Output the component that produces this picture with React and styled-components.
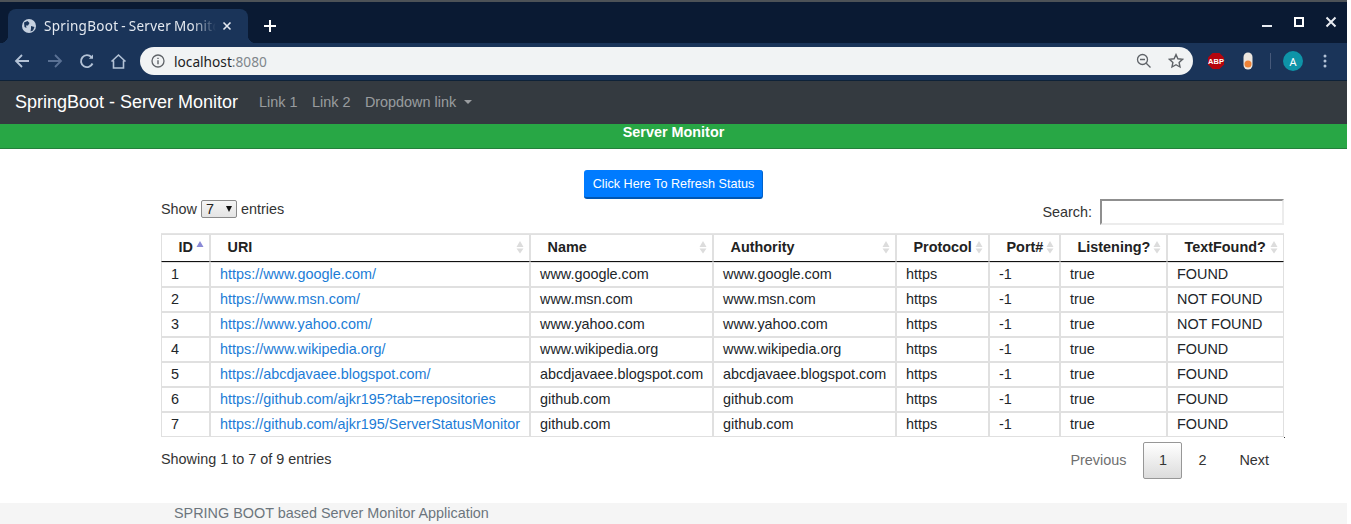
import React from "react";
import styled, { createGlobalStyle } from "styled-components";

const Global = createGlobalStyle`
  html, body { margin: 0; padding: 0; background: #fff; overflow: hidden; }
  * { box-sizing: border-box; }
  body { font-family: "Liberation Sans", Arial, sans-serif; font-size: 14.4px; color: #212529; }
`;

const Page = styled.div`
  width: 1347px;
  height: 524px;
  overflow: hidden;
  display: flex;
  flex-direction: column;
`;

const TabStrip = styled.div`
  height: 43px;
  flex: none;
  background: #0a1a33;
  border-top: 2px solid #4d5257;
  display: flex;
  align-items: flex-end;
  padding-left: 8px;
`;

const Tab = styled.div`
  position: relative;
  width: 240px;
  height: 34px;
  background: #1a3459;
  border-radius: 8px 8px 0 0;
  display: flex;
  align-items: center;
  padding-left: 13px;
  color: #e4e9f0;
  font-family: "Noto Sans", sans-serif;
  font-size: 13.5px;
  &::before, &::after {
    content: "";
    position: absolute;
    bottom: 0;
    width: 8px;
    height: 8px;
  }
  &::before { left: -8px; background: radial-gradient(circle at 0 0, transparent 8px, #1a3459 8.5px); }
  &::after { right: -8px; background: radial-gradient(circle at 100% 0, transparent 8px, #1a3459 8.5px); }
`;

const TabTitle = styled.span`
  margin-left: 7px;
  margin-right: 3px;
  width: 175px;
  white-space: nowrap;
  overflow: hidden;
  letter-spacing: 0.3px;
  word-spacing: -1px;
  -webkit-mask-image: linear-gradient(to right, #000 148px, transparent 172px);
  mask-image: linear-gradient(to right, #000 148px, transparent 172px);
`;

const NewTab = styled.svg`
  margin: 0 0 11px 16px;
  flex: none;
`;

const WindowControls = styled.div`
  margin-left: auto;
  height: 100%;
  display: flex;
  align-items: flex-start;
  gap: 20px;
  padding: 14px 10px 0 0;
`;

const Toolbar = styled.div`
  height: 38px;
  flex: none;
  background: #1a3459;
  border-bottom: 1px solid #0e2238;
  display: flex;
  align-items: center;
  padding: 0 0 1px 14px;
`;

const NavIcon = styled.svg`
  flex: none;
  margin-right: ${(p) => p.$gap}px;
`;

const Omnibox = styled.div`
  width: 1053px;
  height: 28px;
  background: #f1f3f4;
  border-radius: 14px;
  margin-left: 13px;
  display: flex;
  align-items: center;
  padding: 0 9px 0 11px;
  font-family: "Noto Sans", sans-serif;
  font-size: 13.7px;
  color: #202124;
`;

const Url = styled.span`
  margin-left: 9px;
  flex: 1;
  span { color: #80868b; }
`;

const Ext = styled.div`
  margin-left: ${(p) => p.$ml}px;
  flex: none;
  display: flex;
`;

const Separator = styled.div`
  width: 1px;
  height: 16px;
  background: #46597a;
  margin-left: 17px;
  flex: none;
`;

const Avatar = styled.div`
  width: 20px;
  height: 20px;
  border-radius: 50%;
  background: #0e94a8;
  color: #fff;
  margin-left: 12px;
  flex: none;
  display: flex;
  align-items: center;
  justify-content: center;
  font-family: "Noto Sans", sans-serif;
  font-size: 11px;
`;

const Navbar = styled.nav`
  height: 43px;
  flex: none;
  background: #343a40;
  display: flex;
  align-items: center;
  padding-left: 15px;
`;

const Brand = styled.span`
  font-size: 18px;
  color: #fff;
  margin-right: 21px;
`;

const NavLink = styled.span`
  color: rgba(255, 255, 255, 0.5);
  font-size: 14.4px;
  margin-right: 14.5px;
  padding-bottom: 1px;
  display: inline-flex;
  align-items: center;
`;

const Caret = styled.i`
  display: inline-block;
  margin-left: 8px;
  border-top: 4px solid currentColor;
  border-left: 4px solid transparent;
  border-right: 4px solid transparent;
`;

const Banner = styled.div`
  height: 25px;
  flex: none;
  background: #28a745;
  border-bottom: 1px solid #23803b;
  color: #fff;
  font-weight: 700;
  font-size: 14.4px;
  line-height: 16px;
  text-align: center;
`;

const Main = styled.main`
  flex: 1;
  padding-top: 21px;
`;

const RefreshRow = styled.div`
  display: flex;
  justify-content: center;
  height: 29px;
`;

const RefreshButton = styled.button`
  width: 179px;
  height: 29px;
  padding: 1px 0 0 1px;
  background: #007bff;
  color: #fff;
  border: 0;
  border-bottom: 2px solid #0056b3;
  border-right: 1px solid #0062cc;
  border-radius: 3px;
  font: 12.6px "Liberation Sans", sans-serif;
`;

const Content = styled.section`
  padding: 0 63px 0 161px;
`;

const Controls = styled.div`
  display: flex;
  justify-content: space-between;
  height: 34px;
`;

const LengthLabel = styled.label`
  display: flex;
  align-items: center;
  height: 20px;
  color: #333;
`;

const LengthSelect = styled.span`
  width: 36px;
  height: 18px;
  margin: 0 4px 0 4px;
  border: 1px solid #8a8a8a;
  border-radius: 2px;
  background: linear-gradient(#f5f5f5, #e4e4e4);
  display: flex;
  align-items: center;
  justify-content: space-between;
  padding: 0 4px;
  color: #222;
  font-size: 14.4px;
  &::after {
    content: "";
    border-top: 6px solid #111;
    border-left: 3px solid transparent;
    border-right: 3px solid transparent;
    margin-top: -1px;
  }
`;

const SearchLabel = styled.label`
  display: flex;
  align-items: center;
  color: #333;
  height: 26px;
`;

const SearchInput = styled.span`
  display: block;
  width: 184px;
  height: 26px;
  margin-left: 8px;
  background: #fff;
  border: 2px solid;
  border-color: #8f8f8f #ececec #ececec #8f8f8f;
`;

const TableWrap = styled.div`
  position: relative;
  &::after {
    content: "";
    position: absolute;
    right: -1px;
    bottom: -1px;
    width: 1px;
    height: 1px;
    background: #333;
  }
`;

const Table = styled.table`
  table-layout: fixed;
  width: 1123px;
  border-collapse: separate;
  border-spacing: 0;
  border-top: 1px solid #e4e4e4;
`;

const Th = styled.th`
  position: relative;
  height: 28px;
  padding: 0 0 2px 16.5px;
  border: 1px solid #e0e0e0;
  border-bottom: 1px solid #111;
  text-align: left;
  font-size: 14.4px;
  color: #222;
  white-space: nowrap;
`;

const Sort = styled.svg`
  position: absolute;
  right: 5px;
  top: 6px;
`;

const Td = styled.td`
  height: 25px;
  padding: 0 0 2px 9px;
  border: 1px solid #e0e0e0;
  font-size: 14.4px;
  color: #212529;
  white-space: nowrap;
`;

const Link = styled.a`
  color: #1c7cd6;
  text-decoration: none;
`;

const Footerline = styled.div`
  display: flex;
  justify-content: space-between;
  margin-top: 5px;
`;

const Info = styled.div`
  color: #333;
  padding-top: 9px;
`;

const Pager = styled.div`
  display: flex;
  align-items: center;
  height: 37px;
  padding-right: 15px;
`;

const PageItem = styled.span`
  color: ${(p) => (p.$muted ? "#6f6f6f" : "#333")};
  margin-left: ${(p) => p.$ml}px;
  padding-bottom: 2px;
`;

const CurrentPage = styled.span`
  width: 39px;
  height: 37px;
  margin-left: 17px;
  display: flex;
  align-items: center;
  justify-content: center;
  color: #333;
  border: 1px solid #979797;
  border-radius: 2px;
  background: linear-gradient(#fff, #dcdcdc);
  padding-bottom: 1px;
`;

const Footer = styled.footer`
  height: 21px;
  flex: none;
  background: #f5f5f5;
  color: #6c757d;
  padding-left: 174px;
  line-height: 21px;
  font-size: 14.4px;
`;

const columns = [
  { label: "ID", w: 49, active: true },
  { label: "URI", w: 320 },
  { label: "Name", w: 183 },
  { label: "Authority", w: 183 },
  { label: "Protocol", w: 93 },
  { label: "Port#", w: 71 },
  { label: "Listening?", w: 107 },
  { label: "TextFound?", w: 117 },
];

const rows = [
  ["1", "https://www.google.com/", "www.google.com", "FOUND"],
  ["2", "https://www.msn.com/", "www.msn.com", "NOT FOUND"],
  ["3", "https://www.yahoo.com/", "www.yahoo.com", "NOT FOUND"],
  ["4", "https://www.wikipedia.org/", "www.wikipedia.org", "FOUND"],
  ["5", "https://abcdjavaee.blogspot.com/", "abcdjavaee.blogspot.com", "FOUND"],
  ["6", "https://github.com/ajkr195?tab=repositories", "github.com", "FOUND"],
  ["7", "https://github.com/ajkr195/ServerStatusMonitor", "github.com", "FOUND"],
];

function SortIcon({ active }) {
  return (
    <Sort width="8" height="13" viewBox="0 0 8 13">
      <path d="M4 0 7.5 6H.5z" fill={active ? "#8a8ad6" : "#dcdcdc"} />
      {!active && <path d="M4 12.5 .5 7.5h7z" fill="#dcdcdc" />}
    </Sort>
  );
}

export default function App() {
  return (
    <Page>
      <Global />
      <TabStrip>
        <Tab>
          <svg width="16" height="16" viewBox="0 0 16 16">
            <circle cx="8" cy="8" r="7" fill="#c5d0df" />
            <path d="M3 4.5 6.5 3 8.5 5 7 7.5 5 7.5 5.5 10 3.5 9zM10 8l3.5 1-1.5 3.5-2.5 1 .5-3z" fill="#1a3459" />
          </svg>
          <TabTitle>SpringBoot - Server Monitor</TabTitle>
          <svg width="10" height="10" viewBox="0 0 10 10">
            <path d="M1.5 1.5l7 7M8.5 1.5l-7 7" stroke="#e4e9f0" strokeWidth="1.6" />
          </svg>
        </Tab>
        <NewTab width="12" height="12" viewBox="0 0 12 12">
          <path d="M6 0v12M0 6h12" stroke="#fff" strokeWidth="2" />
        </NewTab>
        <WindowControls>
          <svg width="12" height="12" viewBox="0 0 12 12">
            <path d="M1 10h10" stroke="#e8ecf2" strokeWidth="2" />
          </svg>
          <svg width="12" height="12" viewBox="0 0 12 12">
            <rect x="2" y="2" width="8" height="8" fill="none" stroke="#fff" strokeWidth="2" />
          </svg>
          <svg width="12" height="12" viewBox="0 0 12 12">
            <path d="M1.5 1.5l9 9M10.5 1.5l-9 9" stroke="#e8ecf2" strokeWidth="2" />
          </svg>
        </WindowControls>
      </TabStrip>

      <Toolbar>
        <NavIcon $gap={17} width="16" height="16" viewBox="0 0 16 16" fill="none" stroke="#b3c2d6" strokeWidth="1.8">
          <path d="M15 8H2M8 2 2 8l6 6" />
        </NavIcon>
        <NavIcon $gap={16} width="16" height="16" viewBox="0 0 16 16" fill="none" stroke="#5a7194" strokeWidth="1.8">
          <path d="M1 8h13M8 2l6 6-6 6" />
        </NavIcon>
        <NavIcon $gap={15} width="16" height="16" viewBox="0 0 16 16" fill="none" stroke="#b3c2d6" strokeWidth="1.9">
          <path d="M13.5 10.5A6 6 0 1 1 12.4 4" />
          <path d="M14 1.5v4.2H9.8z" fill="#b3c2d6" stroke="none" />
        </NavIcon>
        <NavIcon $gap={0} width="17" height="17" viewBox="0 0 17 17" fill="none" stroke="#b3c2d6" strokeWidth="1.6">
          <path d="M1.5 8.5 8.5 2l7 6.5M3.5 7.5V15h10V7.5" />
        </NavIcon>
        <Omnibox>
          <svg width="14" height="14" viewBox="0 0 14 14" fill="none">
            <circle cx="7" cy="7" r="6" stroke="#5f6368" strokeWidth="1.3" />
            <path d="M7 6.2v4M7 3.7v1.4" stroke="#5f6368" strokeWidth="1.4" />
          </svg>
          <Url>localhost<span>:8080</span></Url>
          <svg width="16" height="16" viewBox="0 0 16 16" fill="none" stroke="#5f6368" strokeWidth="1.3" style={{ marginRight: 16 }}>
            <circle cx="6.5" cy="6.5" r="5" />
            <path d="M4 6.5h5M10.2 10.2l4.3 4.3" />
          </svg>
          <svg width="16" height="16" viewBox="0 0 16 16" fill="none" stroke="#5f6368" strokeWidth="1.4">
            <path d="M8 1.6l1.9 4.2 4.6.5-3.4 3.1.9 4.6L8 11.7 4 14l.9-4.6L1.5 6.3l4.6-.5z" />
          </svg>
        </Omnibox>
        <Ext $ml={14}>
          <svg width="18" height="18" viewBox="0 0 18 18">
            <path d="M5.5 1h7L17 5.5v7L12.5 17h-7L1 12.5v-7z" fill="#b5050d" />
            <text x="9" y="12" textAnchor="middle" fill="#fff" fontFamily="Liberation Sans" fontWeight="700" fontSize="7.5">ABP</text>
          </svg>
        </Ext>
        <Ext $ml={18}>
          <svg width="10" height="18" viewBox="0 0 10 18">
            <rect x="0.5" y="0.5" width="9" height="17" rx="4.5" fill="#ece6df" />
            <circle cx="5" cy="12" r="3.5" fill="#ee8236" />
          </svg>
        </Ext>
        <Separator />
        <Avatar>A</Avatar>
        <Ext $ml={20}>
          <svg width="4" height="14" viewBox="0 0 4 14" fill="#b3c2d6">
            <circle cx="2" cy="2" r="1.5" />
            <circle cx="2" cy="7" r="1.5" />
            <circle cx="2" cy="12" r="1.5" />
          </svg>
        </Ext>
      </Toolbar>

      <Navbar>
        <Brand>SpringBoot - Server Monitor</Brand>
        <NavLink>Link 1</NavLink>
        <NavLink>Link 2</NavLink>
        <NavLink>Dropdown link<Caret /></NavLink>
      </Navbar>

      <Banner>Server Monitor</Banner>

      <Main>
        <RefreshRow>
          <RefreshButton>Click Here To Refresh Status</RefreshButton>
        </RefreshRow>
        <Content>
          <Controls>
            <LengthLabel>Show<LengthSelect>7</LengthSelect>entries</LengthLabel>
            <SearchLabel>Search:<SearchInput /></SearchLabel>
          </Controls>
          <TableWrap>
            <Table>
              <colgroup>
                {columns.map((c) => <col key={c.label} style={{ width: c.w }} />)}
              </colgroup>
              <thead>
                <tr>
                  {columns.map((c) => (
                    <Th key={c.label}>
                      {c.label}
                      <SortIcon active={c.active} />
                    </Th>
                  ))}
                </tr>
              </thead>
              <tbody>
                {rows.map(([id, uri, host, found]) => (
                  <tr key={id}>
                    <Td>{id}</Td>
                    <Td><Link href="#">{uri}</Link></Td>
                    <Td>{host}</Td>
                    <Td>{host}</Td>
                    <Td>https</Td>
                    <Td>-1</Td>
                    <Td>true</Td>
                    <Td>{found}</Td>
                  </tr>
                ))}
              </tbody>
            </Table>
          </TableWrap>
          <Footerline>
            <Info>Showing 1 to 7 of 9 entries</Info>
            <Pager>
              <PageItem $muted $ml={0}>Previous</PageItem>
              <CurrentPage>1</CurrentPage>
              <PageItem $ml={16}>2</PageItem>
              <PageItem $ml={33}>Next</PageItem>
            </Pager>
          </Footerline>
        </Content>
      </Main>

      <Footer>SPRING BOOT based Server Monitor Application</Footer>
    </Page>
  );
}
